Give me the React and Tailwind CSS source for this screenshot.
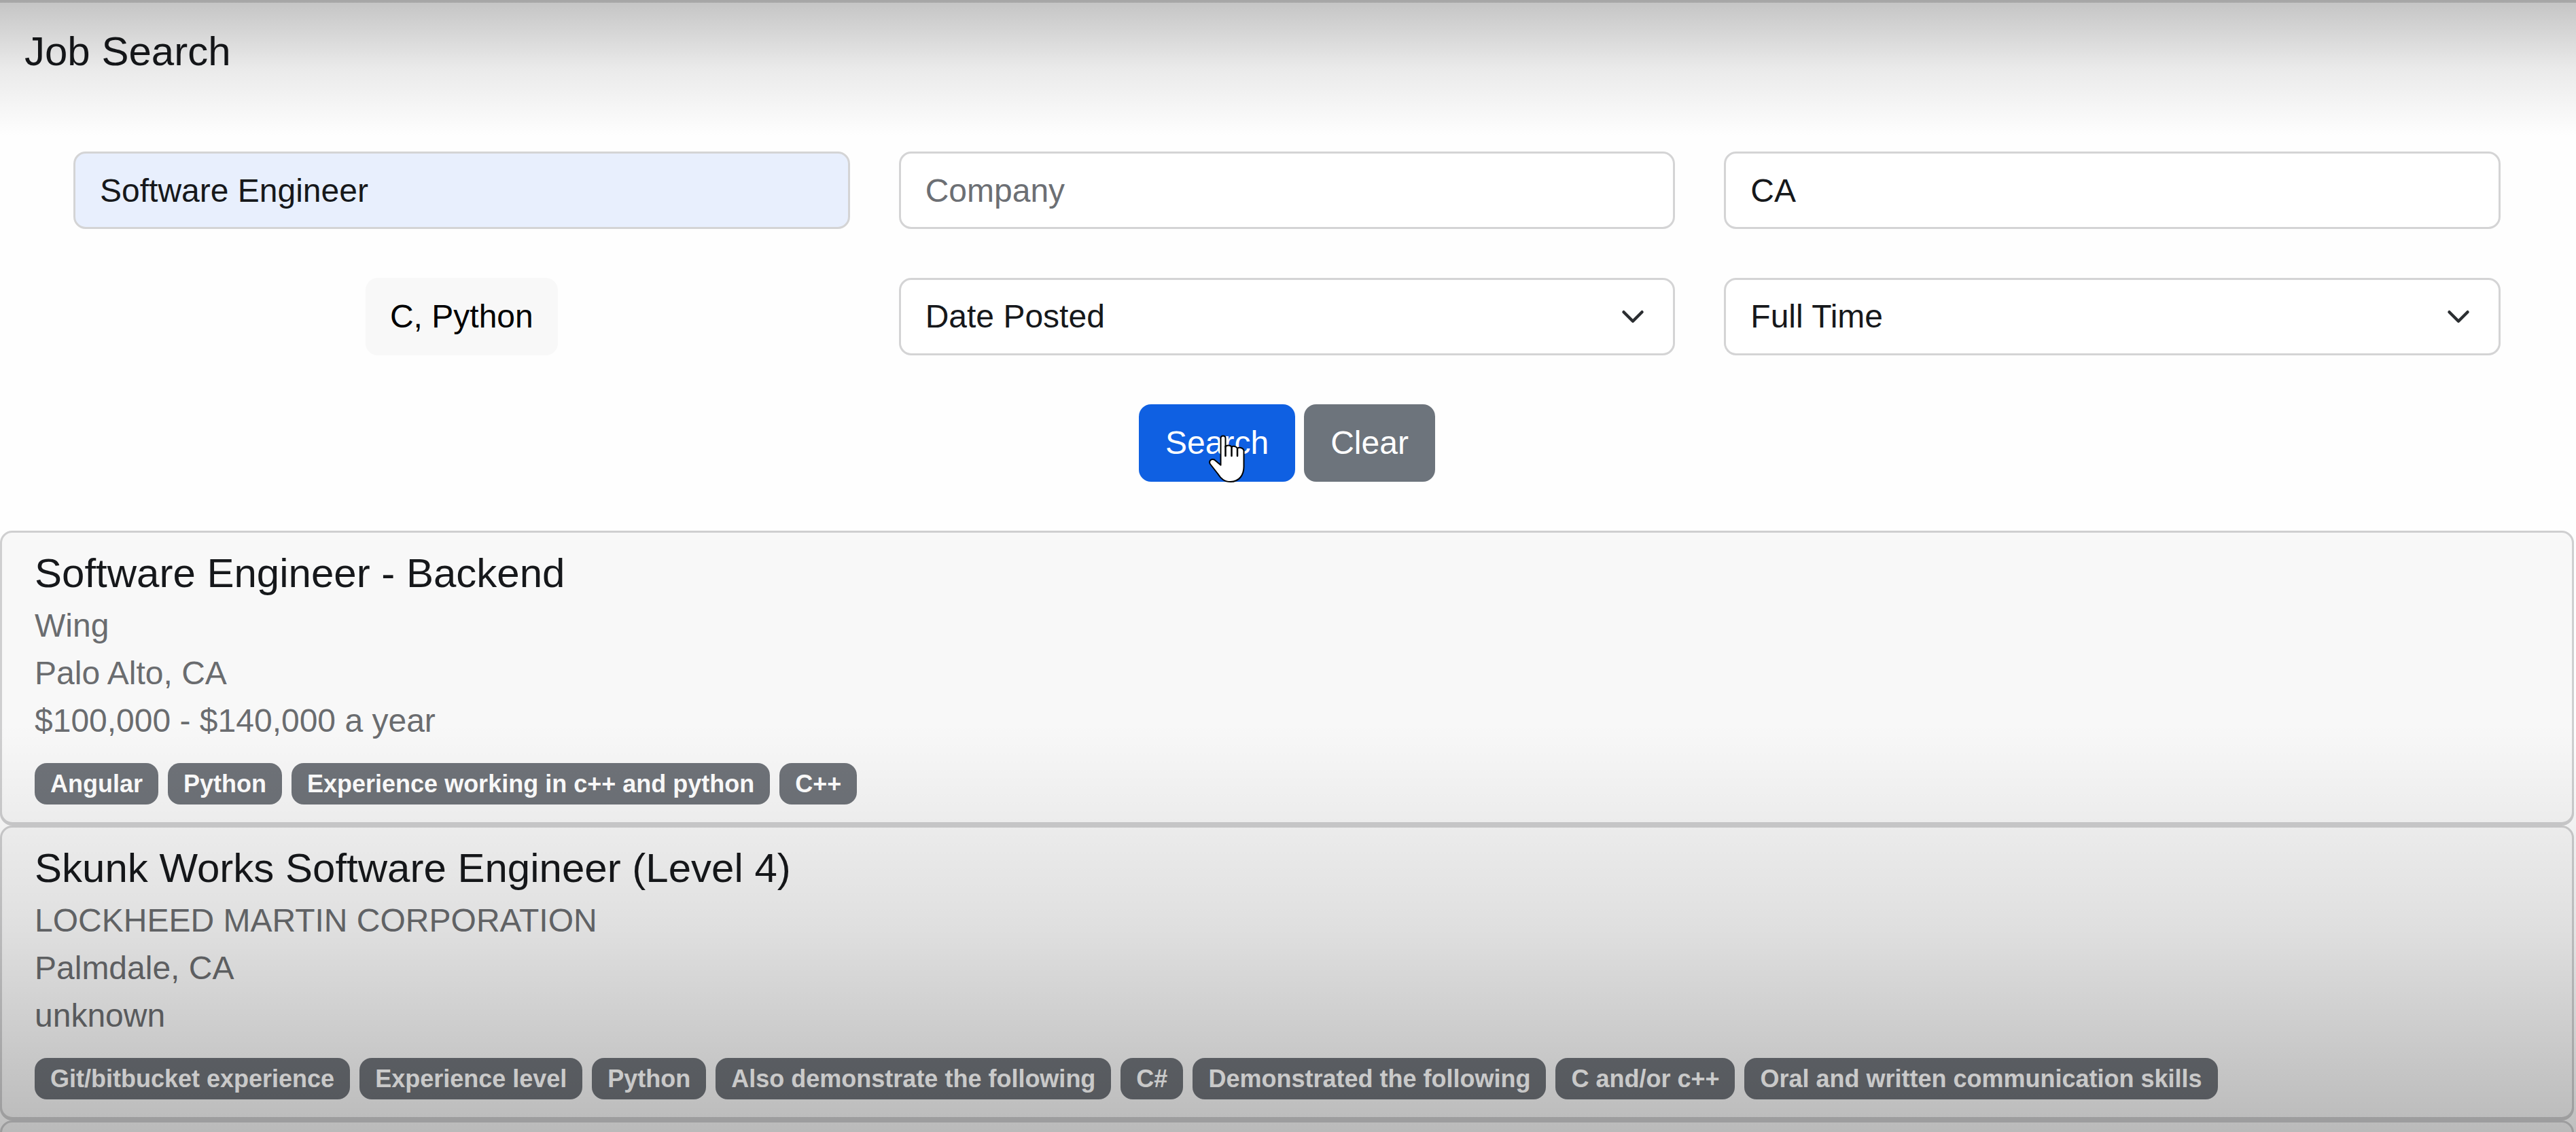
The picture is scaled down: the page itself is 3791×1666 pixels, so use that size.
const jobs = [
  {
    title: 'Software Engineer - Backend',
    company: 'Wing',
    location: 'Palo Alto, CA',
    salary: '$100,000 - $140,000 a year',
    tags: ['Angular', 'Python', 'Experience working in c++ and python', 'C++'],
  },
  {
    title: 'Skunk Works Software Engineer (Level 4)',
    company: 'LOCKHEED MARTIN CORPORATION',
    location: 'Palmdale, CA',
    salary: 'unknown',
    tags: [
      'Git/bitbucket experience',
      'Experience level',
      'Python',
      'Also demonstrate the following',
      'C#',
      'Demonstrated the following',
      'C and/or c++',
      'Oral and written communication skills',
    ],
  },
];

const field =
  'block h-[114px] w-full rounded-[18px] border-[3px] border-[#d4d4d5] px-9 text-[48px] leading-[72px] text-[#16181b] placeholder:text-[#6c6f74] placeholder:opacity-100 outline-none';

function TextField({ label, value, className = 'bg-white' }) {
  return (
    <input
      type="text"
      aria-label={label}
      placeholder={label}
      defaultValue={value}
      className={`${field} ${className}`}
    />
  );
}

function SelectField({ label, options }) {
  return (
    <div className="relative">
      <select aria-label={label} className={`${field} appearance-none bg-white`}>
        {options.map((o) => (
          <option key={o}>{o}</option>
        ))}
      </select>
      <svg
        viewBox="0 0 16 16"
        className="pointer-events-none absolute top-[33px] right-[44px] h-12 w-9"
        fill="none"
        stroke="#2b2e31"
        strokeWidth="2"
        strokeLinecap="round"
        strokeLinejoin="round"
        aria-hidden="true"
      >
        <path d="m2 5 6 6 6-6" />
      </svg>
    </div>
  );
}

function HandCursor() {
  return (
    <svg
      viewBox="0 0 54 70"
      className="pointer-events-none absolute top-[45px] left-[103px] h-[70px] w-[54px]"
      aria-hidden="true"
    >
      <path
        d="M17.500 5c0-2 1.500-3.500 3.500-3.500S24.500 3 24.500 5v13c1-3.500 7.500-3.500 9 0 2-2 7-1.500 8.500 2 2-2 8.500-1.500 9.500 3v24c0 12-7 22-19.500 22-9 0-14-4-19-12L2 43c-2.500-4 1-8.500 6-6.500l9.500 8z"
        fill="white"
        stroke="black"
        strokeWidth="2"
        strokeLinejoin="round"
      />
      <path d="M24.500 17v14M33.500 18v13M42 21v10" stroke="black" strokeWidth="2.500" strokeLinecap="round" />
    </svg>
  );
}

function JobCard({ job }) {
  return (
    <article className="mb-[2px] rounded-[18px] border-[3px] border-[#cfcfd0] bg-[#f8f8f8] px-12 pt-6 pb-[26px] shadow-[0_2px_0_#cfcfd0]">
      <h2 className="mb-[6px] text-[60px] leading-[72px] text-[#16181b]">{job.title}</h2>
      <p>{job.company}</p>
      <p>{job.location}</p>
      <p>{job.salary}</p>
      <ul className="mt-[27px] flex flex-wrap gap-[14px]">
        {job.tags.map((tag) => (
          <li
            key={tag}
            className="rounded-[18px] bg-[#6f7379] px-[23px] py-3 text-[36px] leading-[37px] font-bold text-white"
          >
            {tag}
          </li>
        ))}
      </ul>
    </article>
  );
}

export default function App() {
  return (
    <div className="relative h-screen overflow-hidden bg-[#fefefe] pr-[3px] font-['Liberation_Sans',Arial,sans-serif] text-[48px] leading-[70px] text-[#6a6c6f]">
      <header className="px-9 pt-10 text-[#16181b]">
        <h1 className="text-[60px] leading-[72px]">Job Search</h1>
      </header>

      <form className="px-[108px] pt-[111px] pb-[72px]" onSubmit={(e) => e.preventDefault()}>
        <div className="grid grid-cols-3 gap-[72px]">
          <TextField label="Job title" value="Software Engineer" className="bg-[#e8effd]" />
          <TextField label="Company" />
          <TextField label="Location" value="CA" />
          <button
            type="button"
            className="h-[114px] justify-self-center rounded-[18px] bg-[#f8f8f8] px-9 text-black"
          >
            C, Python
          </button>
          <SelectField label="Date posted" options={['Date Posted', 'Last 24 hours', 'Last week']} />
          <SelectField label="Job type" options={['Full Time', 'Part Time', 'Internship']} />
        </div>
        <div className="mt-[72px] flex justify-center gap-[13px] text-white">
          <button type="submit" className="relative h-[114px] rounded-[18px] bg-[#0f60e2] px-[39px]">
            Search
            <HandCursor />
          </button>
          <button type="reset" className="h-[114px] rounded-[18px] bg-[#6d747c] px-[39px]">
            Clear
          </button>
        </div>
      </form>

      <main>
        {jobs.map((job) => (
          <JobCard key={job.title} job={job} />
        ))}
        <div className="h-48 rounded-t-[18px] border-[3px] border-[#cfcfd0] bg-[#f8f8f8]" />
      </main>

      <div className="pointer-events-none absolute inset-x-0 top-0 h-[200px] bg-linear-to-b from-black/23 via-black/8 to-transparent">
        <div className="h-1 bg-black/15" />
      </div>
      <div className="pointer-events-none absolute inset-x-0 bottom-0 h-[600px] bg-linear-to-b from-transparent via-black/10 to-black/25" />
    </div>
  );
}
